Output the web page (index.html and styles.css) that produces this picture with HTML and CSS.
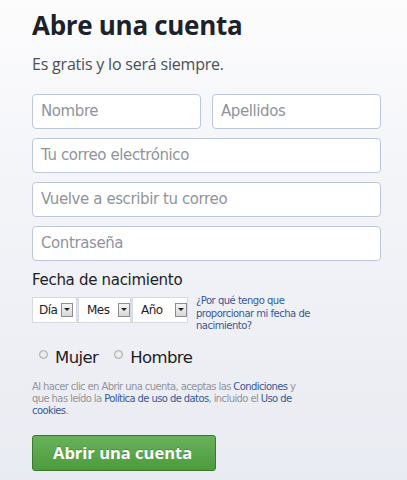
FILE: index.html
```html
<!DOCTYPE html>
<html lang="es">
<head>
<meta charset="utf-8">
<link rel="stylesheet" href="styles.css">
</head>
<body>
<div class="page">
  <h1 class="title">Abre una cuenta</h1>
  <p class="subtitle">Es gratis y lo será siempre.</p>
  <form class="form">
    <div class="row two">
      <div class="input">Nombre</div>
      <div class="input">Apellidos</div>
    </div>
    <div class="input">Tu correo electrónico</div>
    <div class="input">Vuelve a escribir tu correo</div>
    <div class="input">Contraseña</div>
    <div class="bday-label">Fecha de nacimiento</div>
    <div class="bday">
      <div class="selects">
        <div class="sel s-dia"><span>Día</span><i class="arrow"></i></div>
        <div class="sel s-mes"><span>Mes</span><i class="arrow"></i></div>
        <div class="sel s-ano"><span>Año</span><i class="arrow"></i></div>
      </div>
      <a class="why">¿Por qué tengo que<br>proporcionar mi fecha de<br>nacimiento?</a>
    </div>
    <div class="gender">
      <label class="radio"><span class="dot"></span>Mujer</label>
      <label class="radio"><span class="dot"></span>Hombre</label>
    </div>
    <p class="terms">Al hacer clic en Abrir una cuenta, aceptas las <a>Condiciones</a> y que has leído la <a>Política de uso de datos</a>, incluido el <a>Uso de cookies</a>.</p>
    <div class="btn">Abrir una cuenta</div>
  </form>
</div>
</body>
</html>
```

FILE: styles.css
```css
html, body {
  margin: 0;
  padding: 0;
}
body {
  width: 407px;
  height: 480px;
  overflow: hidden;
  background: linear-gradient(to bottom, #fcfcfd 0%, #f3f4f8 40%, #e9ebf2 100%);
  font-family: "Liberation Sans", Arial, sans-serif;
}
.page {
  padding: 8px 0 0 32px;
  width: 349px;
}
.title {
  margin: 0;
  font-family: "Open Sans", sans-serif;
  font-weight: 700;
  font-size: 26px;
  line-height: 34px;
  color: #1d2129;
  letter-spacing: -0.3px;
}
.subtitle {
  margin: 12px 0 0;
  font-family: "Open Sans", sans-serif;
  font-size: 16px;
  line-height: 20px;
  color: #4b4f56;
  letter-spacing: -0.2px;
}
.form {
  margin-top: 20px;
  display: flex;
  flex-direction: column;
  gap: 9px;
}
.row.two {
  display: grid;
  grid-template-columns: 169px 169px;
  gap: 11px;
}
.input {
  box-sizing: border-box;
  height: 35px;
  background: #fff;
  border: 1px solid #bdc7d8;
  border-radius: 4px;
  padding: 0 8px;
  font-family: "DejaVu Sans", sans-serif;
  font-size: 15px;
  line-height: 33px;
  color: #90949c;
  letter-spacing: -0.4px;
}
.bday-label {
  margin-top: 0px;
  font-family: "DejaVu Sans", sans-serif;
  font-size: 15px;
  line-height: 20px;
  color: #1d2129;
  letter-spacing: -0.3px;
}
.bday {
  display: flex;
  gap: 8px;
  margin-top: -2px;
}
.selects {
  display: flex;
  flex: none;
  gap: 1px;
  background: #dde0e8;
  height: 26px;
}
.sel {
  box-sizing: border-box;
  height: 26px;
  background: #fff;
  border: 1px solid #d4dae6;
  display: flex;
  align-items: center;
  gap: 4px;
  font-family: "DejaVu Sans", sans-serif;
  font-size: 12px;
  color: #1d2129;
  letter-spacing: -0.5px;
}
.s-dia { width: 45px; padding-left: 6px; }
.s-mes { width: 53px; padding-left: 8px; gap: 8px; }
.s-ano { width: 56px; padding-left: 8px; gap: 12px; }
.arrow {
  box-sizing: border-box;
  width: 12px;
  height: 14px;
  border: 1px solid #8d8d8d;
  background: linear-gradient(#f4f4f4, #d8d8d8);
  position: relative;
}
.arrow::after {
  content: "";
  position: absolute;
  left: 2px;
  top: 4px;
  border-left: 3px solid transparent;
  border-right: 3px solid transparent;
  border-top: 3px solid #222;
}
.why {
  flex: none;
  white-space: nowrap;
  font-family: "DejaVu Sans", sans-serif;
  font-size: 10px;
  line-height: 12.5px;
  color: #365899;
  letter-spacing: -0.5px;
  margin-top: -2px;
}
.gender {
  display: flex;
  gap: 16px;
  padding-left: 7px;
  margin-top: 5px;
}
.radio {
  display: flex;
  align-items: flex-start;
  gap: 7px;
  font-family: "DejaVu Sans", sans-serif;
  font-size: 16.5px;
  line-height: 22px;
  color: #1d2129;
  letter-spacing: -0.6px;
}
.dot {
  box-sizing: border-box;
  width: 9px;
  height: 9px;
  border-radius: 50%;
  border: 1px solid #a7a7a7;
  background: radial-gradient(#f4f4f4, #dcdcdc);
  margin-top: 3px;
}
.terms {
  margin: 3px 0 0;
  width: 270px;
  font-family: "DejaVu Sans", sans-serif;
  font-size: 10px;
  line-height: 12px;
  color: #90949c;
  letter-spacing: -0.6px;
}
.terms a {
  color: #365899;
}
.btn {
  margin-top: 9px;
  box-sizing: border-box;
  width: 184px;
  height: 36px;
  border: 1px solid #3b7a2c;
  border-radius: 3px;
  background: linear-gradient(#69b25a, #4c9b3e);
  color: #fff;
  font-family: "Open Sans", sans-serif;
  font-weight: 700;
  font-size: 16.5px;
  line-height: 34px;
  padding-left: 20px;
  text-shadow: 0 -1px 0 rgba(0,0,0,0.2);
}
```
